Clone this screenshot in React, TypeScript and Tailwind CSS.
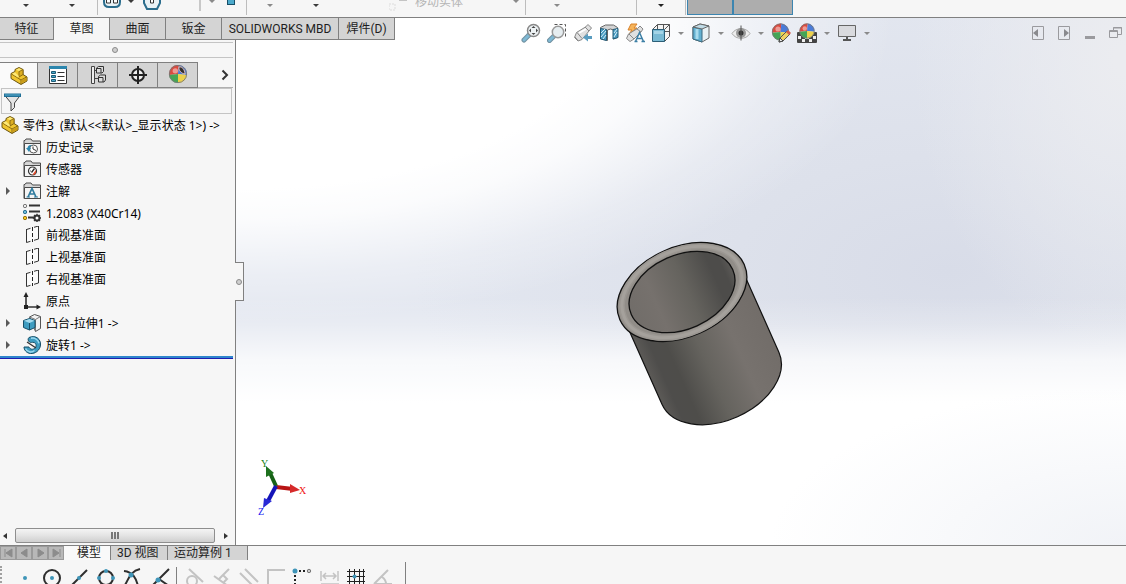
import React from "react";

const uiFont = "font-['Noto_Sans','Noto_Sans_CJK_SC',sans-serif]";
const tabFont = "font-['Roboto','Noto_Sans_CJK_SC',sans-serif]";

const commandTabs = [
  { label: "特征", width: "w-[54px]" },
  { label: "草图", width: "w-14", active: true },
  { label: "曲面", width: "w-14" },
  { label: "钣金", width: "w-14" },
  { label: "SOLIDWORKS MBD", width: "w-[117px]" },
  { label: "焊件(D)", width: "w-14" },
];

const motionTabs = [
  { label: "模型", width: "w-[47px]", active: true },
  { label: "3D 视图", width: "w-[57px]" },
  { label: "运动算例 1", width: "w-20" },
];

type SvgProps = { children: React.ReactNode; size?: number };

function Svg({ children, size = 20 }: SvgProps) {
  return (
    <svg width={size} height={size} viewBox={`0 0 ${size} ${size}`} fill="none" className="block shrink-0" aria-hidden="true">
      {children}
    </svg>
  );
}

function Caret({ className = "text-[#8a8a8a]" }: { className?: string }) {
  return (
    <svg width="6" height="3" viewBox="0 0 6 3" className={`shrink-0 ${className}`} aria-hidden="true">
      <path d="M0 0h6L3 3z" fill="currentColor" />
    </svg>
  );
}

/* ---------- Feature tree icons (18px) ---------- */

function PartIcon() {
  return (
    <Svg size={18}>
      <path d="M1 6.500l4-2V2.500l4-2 4 2v5l4 2.500v4l-6 3.500L1 11.500z" fill="#f0c52e" stroke="#6b5410" strokeLinejoin="round" />
      <path d="M1.500 7l9.500 6 5.500-3M11 13v4" stroke="#8a6b12" />
      <path d="M9 4.500l4-2v5l-4 2.500z" fill="#dcae22" stroke="#8a6b12" />
      <path d="M2 6.800l3-1.500 4 4-1 1.200zM6 2.700L9 1.200l3 1.300-3 1.600z" fill="#fde978" />
      <path d="M11.500 13.300l5-2.500v2.900l-5 2.500z" fill="#c99b18" />
    </Svg>
  );
}

function FolderBase({ children }: { children: React.ReactNode }) {
  return (
    <Svg size={18}>
      <path d="M1 16.500V2.500h1L3 1h5l1.500 2h8v13.500z" fill="#d6d6d6" stroke="#4a4a4a" />
      <path d="M1.500 5.500h16v11h-16z" fill="#f4f4f4" stroke="#4a4a4a" />
      {children}
    </Svg>
  );
}

function HistoryIcon() {
  return (
    <FolderBase>
      <circle cx="10.500" cy="11" r="4" fill="#fff" stroke="#555" />
      <path d="M10 8.500V11l3 1.500" stroke="#333" />
      <path d="M3 10l3 4 2-4H7c0-2 1-2.500 2-3-3-.5-4.500 1-4.500 3z" fill="#2c86ad" />
    </FolderBase>
  );
}

function SensorIcon() {
  return (
    <FolderBase>
      <circle cx="9.500" cy="11" r="4" fill="#fff" stroke="#333" strokeWidth="1.200" />
      <path d="M9.500 14.500l3.500-4.500v3l-2 2z" fill="#e04a2a" />
      <path d="M8.500 12.500l3-4" stroke="#222" strokeWidth="1.300" />
      <path d="M7 11h1" stroke="#555" />
    </FolderBase>
  );
}

function NoteIcon() {
  return (
    <FolderBase>
      <path d="M5 15l4-8.500 4 8.500M6.500 12h5" stroke="#2f7b9e" strokeWidth="1.700" />
      <path d="M3.500 15h3.500M11 15h4" stroke="#2f7b9e" />
    </FolderBase>
  );
}

function MaterialIcon() {
  return (
    <Svg size={18}>
      <path d="M6 1.500h11M6 7.500h11M5 13.500h6" stroke="#333" strokeWidth="2" />
      <circle cx="2" cy="2" r="1.700" fill="#eee" stroke="#777" />
      <circle cx="2" cy="8" r="1.700" fill="#6bbad8" stroke="#2a7294" />
      <circle cx="2" cy="14" r="1.700" fill="#f5c71c" stroke="#94700c" />
      <circle cx="14" cy="14" r="2.500" fill="#fff" stroke="#333" strokeWidth="2" />
      <path d="M14 9.700v2M14 16.500V18M9.800 14h2M16.500 14h1.500M11 11l1.300 1.300M17 11l-1.300 1.300M11 17l1.300-1.300M17 17l-1.300-1.300" stroke="#333" strokeWidth="1.300" />
    </Svg>
  );
}

function PlaneIcon() {
  return (
    <Svg size={18}>
      <path d="M3.500 3.500l12-3v13l-12 3.500z" fill="#fbfbfb" />
      <path d="M3.500 3v13.500M15.500 0v13M3.500 3.500l4-1.200M11 1.300l4.500-1.300M3.500 16.500l4-1.200M11 14.300l4.500-1.300" stroke="#333" />
      <path d="M9.500 1v15" stroke="#222" strokeDasharray="4 2" />
    </Svg>
  );
}

function OriginIcon() {
  return (
    <Svg size={18}>
      <path d="M3 4v11h11" stroke="#333" strokeWidth="1.600" />
      <path d="M.5 5L3 0l2.500 5zM13.500 12.500l4.500 2.500-4.500 2.500z" fill="#222" />
      <path d="M1 13h4v4H1z" fill="#222" />
    </Svg>
  );
}

function ExtrudeIcon() {
  return (
    <Svg size={18}>
      <path d="M6.500 3l5-2.500 6 2v12l-5 3z" fill="#f2f2f2" stroke="#555" />
      <path d="M12.500 5.500v12M6.500 3l6 2.500 5-3" stroke="#777" />
      <path d="M.5 6.500l6-2 5.500 2v7l-5.500 2.500-6-2.500z" fill="#3e9cc0" stroke="#174f68" />
      <path d="M1 6.700l5.500-1.700 5 1.700L6.500 9z" fill="#a5dbee" />
      <path d="M6.500 9v7" stroke="#174f68" />
    </Svg>
  );
}

function RevolveIcon() {
  return (
    <Svg size={18}>
      <path d="M6 1.500c7-3 12 2 11.500 7.500S12 18 7.500 17.500 1 13.500 1 11h5c1 2.500 4 3 6 1s1-5-1-5.500-3 .5-4.500-.5S4.500 3 6 1.500z" fill="#3e9cc0" stroke="#174f68" />
      <path d="M8 2.200c4-.7 7 2 8 5M2.500 12.500c1.500 3.500 6 4.500 9 2" stroke="#9cd9ef" strokeWidth="1.500" />
      <path d="M4 6l9 6" stroke="#333" strokeWidth="1.300" />
    </Svg>
  );
}

const treeItems = [
  { label: "历史记录", icon: <HistoryIcon /> },
  { label: "传感器", icon: <SensorIcon /> },
  { label: "注解", icon: <NoteIcon />, expandable: true },
  { label: "1.2083 (X40Cr14)", icon: <MaterialIcon /> },
  { label: "前视基准面", icon: <PlaneIcon /> },
  { label: "上视基准面", icon: <PlaneIcon /> },
  { label: "右视基准面", icon: <PlaneIcon /> },
  { label: "原点", icon: <OriginIcon /> },
  { label: "凸台-拉伸1 ->", icon: <ExtrudeIcon />, expandable: true },
  { label: "旋转1 ->", icon: <RevolveIcon />, expandable: true },
];

/* ---------- Manager tab icons ---------- */

function Ball({ cx, cy, r }: { cx: number; cy: number; r: number }) {
  return (
    <g transform={`translate(${cx} ${cy}) scale(${r})`}>
      <path d="M0 0L-1 .1A1 1 0 0 1 .1-1z" fill="#dc4a3e" />
      <path d="M0 0L.1-1A1 1 0 0 1 1 .1z" fill="#4a7bd8" />
      <path d="M0 0L1 .1A1 1 0 0 1 0 1z" fill="#ecd04a" />
      <path d="M0 0L0 1A1 1 0 0 1-1 .1z" fill="#45a555" />
      <circle cx="-.3" cy="-.35" r=".3" fill="#fff" opacity=".45" />
      <circle r=".96" stroke="#777" strokeWidth=".1" />
    </g>
  );
}

const managerTabs = [
  { name: "FeatureManager", icon: <PartIcon />, width: "w-[38px]", active: true },
  {
    name: "PropertyManager",
    width: "w-10",
    icon: (
      <Svg>
        <path d="M1.500 1.500h17v17h-17z" fill="#fff" stroke="#333" />
        <path d="M1 1h18v3H1z" fill="#2c86ad" />
        <path d="M3.500 6.500h4v2h-4zM3.500 10.500h4v2h-4zM3.500 14.500h4v2h-4z" fill="#4ba9cb" stroke="#1d5a75" />
        <path d="M9.500 7.500h7M9.500 11.500h7M9.500 15.500h7" stroke="#333" />
      </Svg>
    ),
  },
  {
    name: "ConfigurationManager",
    width: "w-10",
    icon: (
      <Svg>
        <path d="M3.500 1.500h3v17h-3zM6.500 5.500h3M6.500 13.500h4" fill="#eee" stroke="#444" />
        <path d="M8.500 3l2-1.500h5v5L14 8H8.500zM10.500 11.500l2-1.500h5v5L16 17h-5.500z" fill="#ddd" stroke="#333" />
        <path d="M8.500 3.500H13V8M10.500 12.500H15V17" stroke="#333" />
      </Svg>
    ),
  },
  {
    name: "DimXpertManager",
    width: "w-10",
    icon: (
      <Svg>
        <circle cx="10" cy="10" r="6" fill="#eee" stroke="#222" strokeWidth="2" />
        <path d="M10 1v18M1 10h18" stroke="#222" strokeWidth="2" />
      </Svg>
    ),
  },
  {
    name: "DisplayManager",
    width: "w-10",
    icon: (
      <Svg>
        <Ball cx={10} cy={9} r={9} />
        <path d="M11 2c3-1 6 3 6 7-3 0-7-4-6-7z" fill="#33302e" stroke="#e8c0b8" />
      </Svg>
    ),
  },
];

/* ---------- Heads-up view toolbar ---------- */

const viewTools = [
  {
    name: "整屏显示全图",
    icon: (
      <Svg>
        <path d="M3 17l5-5" stroke="#6f8f9f" strokeWidth="5" strokeLinecap="round" />
        <path d="M3 17l5-5" stroke="#7fb9d4" strokeWidth="3" strokeLinecap="round" />
        <circle cx="12.500" cy="7.500" r="6" fill="#eef3f5" stroke="#888" strokeWidth="1.500" />
        <path d="M12.500 3l2 2h-4zM12.500 12l2-2h-4zM8 7.500l2-2v4zM17 7.500l-2-2v4z" fill="#444" />
      </Svg>
    ),
  },
  {
    name: "局部放大",
    icon: (
      <Svg>
        <path d="M7.500 1.500h11v12" stroke="#555" strokeDasharray="3 2" />
        <path d="M2.500 17.500l4-4" stroke="#6f8f9f" strokeWidth="5" strokeLinecap="round" />
        <path d="M2.500 17.500l4-4" stroke="#7fb9d4" strokeWidth="3" strokeLinecap="round" />
        <circle cx="11" cy="9" r="5.700" fill="#e6edf0" stroke="#999" strokeWidth="1.500" />
      </Svg>
    ),
  },
  {
    name: "上一视图",
    icon: (
      <Svg>
        <path d="M1.500 14.500l2-5 9-5.500L15 1.500 18.500 5 16 8l-7 8.500-4 1.500z" fill="#e0e0e0" stroke="#888" strokeLinejoin="round" />
        <path d="M4 9.500l5 6M12 4l4 4M2 14l3 3.500" stroke="#888" />
        <path d="M6 10l7-4" stroke="#fff" strokeWidth="1.500" />
        <path d="M10 14.500l5-4v2.500h4v3h-4v2.500z" fill="#5a9dc0" />
      </Svg>
    ),
  },
  {
    name: "剖面视图",
    icon: (
      <Svg>
        <path d="M1.500 4.500l5-2.500h8l4 2.500v10l-4 1.500V7l-3-1-3 1v10.500l-7-2z" fill="#d4d4d4" stroke="#666" />
        <path d="M1.500 5.500l6 1v11l-6-1.500zM14 6.500l5-1v9l-5 1.500z" fill="#4a9cc2" stroke="#245a75" />
        <path d="M2 10l4-4M2 14l5-6M4 16l3-4M15 10l3-4M15 14l3-5" stroke="#d6eef8" />
      </Svg>
    ),
  },
  {
    name: "动态注解视图",
    icon: (
      <Svg>
        <path d="M6 1h6L9 5h3L4 11l3-4H3z" fill="#f6b45a" stroke="#d9822b" />
        <path d="M1.500 15.500l2-4.500 9-5.500L15 3l3 3-2 3-7 7-4 2.500z" fill="#e0e0e0" stroke="#888" strokeLinejoin="round" />
        <path d="M4 11l5 5M12 6l4 3" stroke="#888" />
        <path d="M10.500 18.500l4-9 4 9M12 15.500h5M9.500 18.500h3M16.500 18.500h3.500" stroke="#3c7fa5" strokeWidth="1.500" />
      </Svg>
    ),
  },
  {
    name: "视图定向",
    menu: true,
    icon: (
      <Svg>
        <path d="M1.500 6.500l5-5h12v12l-5 5M13.500 6.500l5-5M6.500 1.500v5M12.500 1.500v5M13.500 8.500h5" fill="#f4f4f4" stroke="#555" />
        <path d="M1.500 6.500h12v12h-12z" fill="#79bad4" stroke="#2c5f78" />
        <path d="M3 8h9v3H3z" fill="#a4d4e6" />
      </Svg>
    ),
  },
  {
    name: "显示样式",
    menu: true,
    icon: (
      <Svg>
        <path d="M2 4l7-3 9 2v12l-7 4-9-3z" fill="#e9f1f4" stroke="#666" />
        <path d="M2 4l9 2v13l-9-3z" fill="#63b0d0" stroke="#3c6b80" />
        <path d="M2 4l9 2 7-3-9-2z" fill="#c0dbe6" stroke="#666" />
        <path d="M6 6v10" stroke="#a9dcee" strokeWidth="3" />
      </Svg>
    ),
  },
  {
    name: "隐藏/显示项目",
    menu: true,
    icon: (
      <Svg>
        <path d="M1 10.500C5 4 15 4 19 10.500 15 17 5 17 1 10.500z" fill="#ededed" stroke="#aaa" />
        <circle cx="10" cy="10" r="5" fill="#999" />
        <circle cx="10" cy="10" r="2.500" fill="#333" />
        <path d="M10 2.500v15" stroke="#555" />
      </Svg>
    ),
  },
  {
    name: "编辑外观",
    icon: (
      <Svg>
        <Ball cx={9.5} cy={9} r={8.5} />
        <path d="M8 19l1-4 7-7 3 3-7 7z" fill="#f0d060" stroke="#555" />
        <path d="M8 19l1-4 3 3z" fill="#eee" stroke="#444" />
        <path d="M15 9l2-2 3 3-2 2z" fill="#d05a4a" />
      </Svg>
    ),
  },
  {
    name: "应用布景",
    menu: true,
    icon: (
      <Svg>
        <path d="M.5 9.500h19v10H.5z" fill="#eee" stroke="#444" />
        <path d="M1 10h4v3H1zM15 10h4v3h-4zM4 13h4v3H4zM12 13h4v3h-4zM1 16h4v3H1zM8 16h4v3H8zM15 16h4v3h-4z" fill="#444" />
        <Ball cx={10} cy={8} r={7.5} />
      </Svg>
    ),
  },
  {
    name: "视图设定",
    menu: true,
    icon: (
      <Svg>
        <path d="M1.500 2.500h17v11h-17z" fill="#d9dade" stroke="#666" />
        <path d="M9 14h2v2h3v2H6v-2h3z" fill="#555" />
      </Svg>
    ),
  },
];

/* ---------- Sketch toolbar at the bottom ---------- */

const sketchTools = [
  { name: "点", icon: <circle cx="13" cy="14" r="2" fill="#3f95b8" /> },
  {
    name: "圆",
    icon: (
      <>
        <circle cx="13" cy="14" r="8" stroke="#2e2e2e" strokeWidth="2" />
        <circle cx="13" cy="14" r="2" fill="#3f95b8" />
      </>
    ),
  },
  {
    name: "直线",
    icon: (
      <>
        <path d="M5 22L21 6" stroke="#2e2e2e" strokeWidth="2" />
        <circle cx="13" cy="14" r="2" fill="#3f95b8" />
      </>
    ),
  },
  {
    name: "象限点",
    icon: (
      <>
        <circle cx="13" cy="14" r="7" stroke="#2e2e2e" strokeWidth="2" />
        <circle cx="13" cy="7" r="2" fill="#3f95b8" />
        <circle cx="6" cy="14" r="2" fill="#3f95b8" />
        <circle cx="20" cy="14" r="2" fill="#3f95b8" />
      </>
    ),
  },
  {
    name: "交叉点",
    icon: (
      <>
        <path d="M4 7c9 1 12 7 14 15M20 5c-9 2-11 9-15 16" stroke="#2e2e2e" strokeWidth="2" />
        <circle cx="11" cy="11" r="2.500" fill="#3f95b8" />
      </>
    ),
  },
  {
    name: "最近端",
    icon: (
      <>
        <path d="M22 5L6 21M12 15l10 7" stroke="#2e2e2e" strokeWidth="2" />
        <circle cx="11" cy="16" r="2.500" fill="#3f95b8" />
      </>
    ),
  },
];

const snapTools = [
  {
    name: "相切",
    icon: (
      <>
        <circle cx="11" cy="17" r="5" stroke="#c3c3c3" strokeWidth="2" />
        <path d="M8 5l14 13" stroke="#c3c3c3" strokeWidth="2" />
      </>
    ),
  },
  { name: "垂直", icon: <path d="M6 12l14 10M21 5L11 15M15 11l4 4-3 3" stroke="#c3c3c3" strokeWidth="2" /> },
  { name: "平行", icon: <path d="M5 9l13 13M10 5l13 13" stroke="#c3c3c3" strokeWidth="2" /> },
  { name: "水平/竖直", icon: <path d="M6 24V6h17" stroke="#c3c3c3" strokeWidth="2" /> },
  {
    name: "与点水平/竖直",
    icon: (
      <>
        <path d="M6 7v17M6 7h14" stroke="#222" strokeWidth="2" strokeDasharray="2 2" />
        <circle cx="6" cy="7" r="2.500" fill="#3f95b8" />
        <circle cx="20" cy="7" r="1.700" fill="#ccc" stroke="#777" />
      </>
    ),
  },
  { name: "长度", icon: <path d="M5 7v10M22 7v10M7 12h13M10 9l-3 3 3 3M17 9l3 3-3 3M5 20h18" stroke="#c3c3c3" strokeWidth="1.500" /> },
  {
    name: "网格",
    icon: (
      <>
        <path d="M4 7.500h18M4 12.500h18M4 17.500h18M6.500 5v19M11.500 5v19M16.500 5v19M20.500 5v19" stroke="#222" />
        <circle cx="11.500" cy="12.500" r="2" fill="#3f95b8" />
      </>
    ),
  },
  { name: "角度", icon: <path d="M4 20L18 6M4 20h18M12 13c3 2 4 4 4 7" stroke="#c3c3c3" strokeWidth="2" /> },
];

function ToolButton({ name, children }: { name: string; children: React.ReactNode }) {
  return (
    <button aria-label={name} className="block w-[27px] shrink-0">
      <svg width="26" height="24" viewBox="0 0 26 24" fill="none" className="mt-1" aria-hidden="true">
        {children}
      </svg>
    </button>
  );
}

function Ribbon() {
  return (
    <header className="flex h-[18px] shrink-0 items-start overflow-hidden border-b border-[#808080] bg-[#f6f6f6] text-[#3a3a3a]">
      <button aria-label="草图绘制" className="flex h-[10px] w-[52px] items-center justify-center">
        <Caret className="text-[#3a3a3a]" />
      </button>
      <button aria-label="智能尺寸" className="flex h-[10px] w-10 items-center justify-center">
        <Caret className="text-[#3a3a3a]" />
      </button>
      <div className="ml-[5px] h-[15px] w-px bg-[#bdbdbd]" />
      <button aria-label="槽口" className="ml-[5px] flex w-[18px]">
        <svg width="18" height="8" viewBox="0 0 18 8" fill="none">
          <path d="M1 0v2c0 3 2 5 5 5h6c3 0 5-2 5-5V0" fill="#e8f1f5" stroke="#2b6d8d" strokeWidth="2" />
          <path d="M3.500-1h4v4h-4zM10.500-1h4v4h-4z" fill="#fff" stroke="#333" />
        </svg>
      </button>
      <button aria-label="槽口选项" className="flex w-5 justify-center">
        <Caret className="text-[#3a3a3a]" />
      </button>
      <button aria-label="多边形" className="flex w-[22px] justify-center">
        <svg width="18" height="10" viewBox="0 0 18 10" fill="none">
          <path d="M1 0v3l3 6h10l3-6V0" fill="#e8f1f5" stroke="#2b6d8d" strokeWidth="2" />
          <path d="M7.500-1h3v4h-3z" fill="#fff" stroke="#333" />
        </svg>
      </button>
      <div className="ml-9 h-[11px] w-0.5 bg-[#c8c8c8]" />
      <button aria-label="剪裁实体" className="flex w-[22px] justify-center">
        <Caret />
      </button>
      <button aria-label="转换实体引用" className="ml-1 flex w-2">
        <span className="h-[5px] w-full border border-t-0 border-[#174f68] bg-[#4ba9cb]" />
      </button>
      <div className="ml-[11px] h-[15px] w-px bg-[#bdbdbd]" />
      <button aria-label="等距实体" className="flex h-[10px] w-[46px] items-center justify-center">
        <Caret />
      </button>
      <button aria-label="镜向实体" className="flex h-[10px] w-[46px] items-center justify-center">
        <Caret className="text-[#3a3a3a]" />
      </button>
      <button className="-mt-1.5 ml-[50px] flex text-xs leading-4 text-[#b4b4b4]">
        <svg width="26" height="18" viewBox="0 0 26 18" fill="none" aria-hidden="true">
          <path d="M0 10h6v6H0z" stroke="#dcdcdc" strokeDasharray="2 1" />
          <path d="M10 6.500h8" stroke="#c4c4c4" />
        </svg>
        移动实体
      </button>
      <button aria-label="移动实体选项" className="ml-[45px] flex w-4 justify-center">
        <Caret />
      </button>
      <div className="ml-px h-[15px] w-px bg-[#bdbdbd]" />
      <button aria-label="显示/删除几何关系" className="ml-2 flex h-[10px] w-[46px] items-center justify-center">
        <Caret />
      </button>
      <div className="ml-14 h-[15px] w-px bg-[#bdbdbd]" />
      <button aria-label="快速捕捉" className="flex h-[10px] w-12 items-center justify-center">
        <Caret className="text-[#222222]" />
      </button>
      <div className="h-[15px] w-px bg-[#bdbdbd]" />
      <button aria-label="快速草图" className="ml-px h-[15px] w-[46px] border border-t-0 border-[#3c85b0] bg-[#adadad]" />
      <button aria-label="Instant2D" className="h-[15px] w-[60px] border border-t-0 border-[#3c85b0] bg-[#adadad]" />
    </header>
  );
}

function FeaturePanel() {
  return (
    <aside className="relative flex w-[236px] min-h-0 flex-1 flex-col border-r border-[#808080] bg-[#f6f6f6] pt-0.5">
      <div className="mr-0.5 flex h-4 shrink-0 items-center justify-center border-y border-[#c4c4c4] pr-1">
        <span className="size-1.5 rounded-full border border-[#8a8a8a] bg-[#cfcfcf]" />
      </div>

      <div role="tablist" className="mr-0.5 mt-1 flex h-[26px] shrink-0 border-b border-[#b0b0b0]">
        {managerTabs.map((tab) => (
          <button
            key={tab.name}
            role="tab"
            aria-label={tab.name}
            aria-selected={!!tab.active}
            className={`flex h-[26px] items-center justify-center border-r border-t border-[#808080] ${tab.width} ${
              tab.active ? "bg-[#fafafa]" : "border-b bg-[#d4d4d4]"
            }`}
          >
            {tab.icon}
          </button>
        ))}
        <button aria-label="更多" className="ml-auto flex w-4 items-center justify-center">
          <svg width="8" height="12" viewBox="0 0 8 12" fill="none">
            <path d="M1.500 1.500L6 6l-4.500 4.500" stroke="#333" strokeWidth="2" />
          </svg>
        </button>
      </div>

      <label className="ml-px mr-[3px] flex h-[26px] shrink-0 items-center border border-[#c4c4c4] pl-px pt-px">
        <Svg>
          <path d="M1.500 3h16l-6 8v4.500L8 19v-8z" fill="#e4e4e4" stroke="#444" />
          <path d="M1 1.500h17V5H1z" fill="#1f6f96" />
          <path d="M2 3h15" stroke="#5fb0d0" />
        </Svg>
        <input aria-label="过滤器" className="min-w-0 flex-1 bg-transparent text-xs outline-none" />
      </label>

      <div className="mr-0.5 overflow-hidden border-b border-[#1d1db0] text-xs text-black">
        <div className="border-b-2 border-[#2f86cc]">
          <div className="flex h-[22px] items-center gap-1 whitespace-pre pl-px">
            <PartIcon />
            <span className="pt-px">{"零件3  (默认<<默认>_显示状态 1>) ->"}</span>
          </div>
          <ul>
            {treeItems.map((item) => (
              <li key={item.label} className="flex h-[22px] items-center pl-1.5">
                <span className="w-[17px] shrink-0">
                  {item.expandable && (
                    <svg width="5" height="8" viewBox="0 0 5 8" aria-hidden="true">
                      <path d="M0 0l4 4-4 4z" fill="#5a5a5a" />
                    </svg>
                  )}
                </span>
                {item.icon}
                <span className="ml-[5px] whitespace-nowrap pt-px">{item.label}</span>
              </li>
            ))}
          </ul>
        </div>
      </div>

      {/* horizontal scrollbar */}
      <div className="mb-px mr-0.5 mt-auto flex h-[17px] shrink-0 items-center">
        <button aria-label="向左滚动" className="flex w-[15px] justify-start pl-[3px]">
          <svg width="4" height="6" viewBox="0 0 4 6"><path d="M4 0v6L0 3z" fill="#333" /></svg>
        </button>
        <div className="mr-1 flex h-[15px] flex-1 items-center justify-center gap-px rounded-xs border border-[#8e8e8e] bg-linear-to-b from-[#f4f4f4] via-[#e4e4e4] to-[#cfcfcf]">
          <span className="h-[7px] w-0.5 bg-[#777777]" />
          <span className="h-[7px] w-0.5 bg-[#777777]" />
          <span className="h-[7px] w-0.5 bg-[#777777]" />
        </div>
        <button aria-label="向右滚动" className="flex w-[14px] justify-center">
          <svg width="4" height="6" viewBox="0 0 4 6"><path d="M0 0v6l4-3z" fill="#333" /></svg>
        </button>
      </div>

      {/* splitter handle */}
      <button aria-label="折叠面板" className="absolute -right-[9px] top-[222px] flex h-[39px] w-[9px] items-center justify-center border border-l-0 border-[#808080] bg-[#f6f6f6]">
        <span className="size-1.5 shrink-0 rounded-full border border-[#8a8a8a] bg-[#cfcfcf]" />
      </button>
    </aside>
  );
}

function CupModel() {
  return (
    <svg width="170" height="190" viewBox="0 0 170 190" fill="none" className="absolute left-[378px] top-[222px]" aria-label="零件3">
      <defs>
        <linearGradient id="outer" x1="-64" x2="64" y1="0" y2="0" gradientUnits="userSpaceOnUse">
          <stop offset="0" stopColor="#5c5a57" />
          <stop offset=".1" stopColor="#4e4d4b" />
          <stop offset=".22" stopColor="#4e4d4a" />
          <stop offset=".45" stopColor="#65635e" />
          <stop offset=".72" stopColor="#77726e" />
          <stop offset="1" stopColor="#726d69" />
        </linearGradient>
        <linearGradient id="inner" x1="-56" x2="56" y1="0" y2="0" gradientUnits="userSpaceOnUse">
          <stop offset="0" stopColor="#716d69" />
          <stop offset=".25" stopColor="#76716d" />
          <stop offset=".55" stopColor="#65635e" />
          <stop offset=".82" stopColor="#4d4c4a" />
          <stop offset=".92" stopColor="#4d4c4a" />
          <stop offset="1" stopColor="#5c5a57" />
        </linearGradient>
      </defs>
      <g transform="translate(68 52) rotate(-24)">
        <path d="M-64 0V94.500A64 42 0 0 0 64 94.500V0z" fill="url(#outer)" stroke="#111" strokeWidth="1.200" />
        <ellipse rx="68" ry="44.800" fill="#918d88" stroke="#111" strokeWidth="1.300" />
        <ellipse rx="63" ry="41.500" stroke="#9b9792" strokeWidth="6" />
        <ellipse rx="63" ry="41.500" stroke="#a5a19c" strokeWidth="3" />
        <ellipse rx="55.500" ry="37" fill="url(#inner)" stroke="#111" strokeWidth="1.300" />
      </g>
    </svg>
  );
}

function Triad() {
  return (
    <svg width="56" height="64" viewBox="0 0 56 64" fill="none" className="absolute bottom-[26px] left-[18px]" aria-hidden="true">
      <path d="M22 32l17 2" stroke="#b81414" strokeWidth="4" />
      <path d="M36 29l10 6-10 3z" fill="#d62a2a" />
      <path d="M22 31l-6-13" stroke="#176117" strokeWidth="4" />
      <path d="M12 11l8 7-8 4z" fill="#1d701d" />
      <path d="M22 31l-8 15" stroke="#1414b8" strokeWidth="4" />
      <path d="M10 43l8 3-9 7z" fill="#2a2ad6" />
      <g fontFamily="Liberation Serif" fontSize="10">
        <text x="7" y="12" fill="#148014">Y</text>
        <text x="45" y="39" fill="#f01414">X</text>
        <text x="4" y="60" fill="#1414f0">Z</text>
      </g>
    </svg>
  );
}

function Viewport() {
  return (
    <section className="relative min-w-0 flex-1 overflow-hidden bg-[radial-gradient(ellipse_40%_30%_at_100%_100%,#f1f3f7_0%,transparent_100%),linear-gradient(to_bottom,transparent_53%,rgba(255,255,255,0.2)_58%,rgba(255,255,255,0.75)_65%,white_73%),radial-gradient(ellipse_74%_58%_at_0%_0%,white_56%,rgba(255,255,255,0.85)_66%,rgba(255,255,255,0.3)_84%,transparent_100%),radial-gradient(ellipse_24%_55%_at_100%_8%,#ebecf0_5%,transparent_100%),radial-gradient(ellipse_60%_55%_at_80%_48%,#d8dce8_0%,#dde1eb_40%,#e3e7f0_100%)]">
      <div className="flex items-start pl-[285px] pr-0.5 pt-[5px]">
        {viewTools.map((tool) => (
          <React.Fragment key={tool.name}>
            <button aria-label={tool.name} className={tool.menu ? "" : "mr-1.5"}>
              {tool.icon}
            </button>
            {tool.menu && (
              <button aria-label={`${tool.name}选项`} className="flex h-5 w-5 items-center justify-center">
                <Caret />
              </button>
            )}
          </React.Fragment>
        ))}
        <div className="ml-auto flex gap-[10px] pt-0.5">
          <button aria-label="左窗格">
            <Svg size={16}>
              <path d="M2.500 1.500h11v13h-11z" stroke="#9a9a9e" />
              <path d="M8 4v8L3 8z" fill="#8a8a8e" />
            </Svg>
          </button>
          <button aria-label="右窗格">
            <Svg size={16}>
              <path d="M2.500 1.500h11v13h-11z" stroke="#9a9a9e" />
              <path d="M8 4v8l5-4z" fill="#8a8a8e" />
            </Svg>
          </button>
          <button aria-label="最小化">
            <Svg size={16}>
              <path d="M3 11h10v3H3z" fill="#9a9a9e" />
            </Svg>
          </button>
          <button aria-label="还原">
            <Svg size={16}>
              <path d="M5.500 5V2.500h8v7H10M1.500 5.500h8v7h-8z" stroke="#9a9a9e" />
              <path d="M1 6.500h9M5 3h9" stroke="#9a9a9e" />
            </Svg>
          </button>
        </div>
      </div>
      <CupModel />
      <Triad />
    </section>
  );
}

export default function App() {
  return (
    <div className={`flex h-screen flex-col overflow-hidden bg-[#f6f6f6] text-xs text-[#1e1e1e] ${uiFont}`}>
      <Ribbon />

      <main className="flex min-h-0 flex-1">
        {/* the command tabs run past the panel, over the graphics area */}
        <div className="relative z-10 flex w-[236px] shrink-0 flex-col">
          <nav role="tablist" className={`flex h-[22px] w-max shrink-0 ${tabFont}`}>
            {commandTabs.map((tab) => (
              <button
                key={tab.label}
                role="tab"
                aria-selected={!!tab.active}
                className={`flex items-center justify-center whitespace-nowrap border-r border-[#808080] ${tab.width} ${
                  tab.active ? "bg-[#f6f6f6]" : "border-b bg-[#d4d4d4]"
                }`}
              >
                {tab.label}
              </button>
            ))}
          </nav>
          <FeaturePanel />
        </div>
        <Viewport />
      </main>

      <footer className="h-[39px] shrink-0 overflow-hidden border-t border-[#808080]">
        <div className={`flex h-[14px] ${tabFont}`}>
          {["M4 2v8M11 2v8L5 6z", "M10 2v8L4 6z", "M5 2v8l6-4z", "M11 2v8M4 2v8l6-4z"].map((d, i) => (
            <button key={d} aria-label={["最前", "向前", "向后", "最后"][i]} className="h-[14px] w-4 border border-[#9a9a9a] bg-[#b8b8b8]">
              <svg width="14" height="12" viewBox="0 0 14 12" aria-hidden="true">
                <path d={d} fill="#8c8c8c" stroke="#8c8c8c" />
              </svg>
            </button>
          ))}
          {motionTabs.map((tab) => (
            <button
              key={tab.label}
              className={`flex items-center border-r border-[#808080] whitespace-nowrap leading-[14px] ${tab.width} ${
                tab.active ? "justify-center bg-[#f9f9f9] pl-1" : "bg-[#d4d4d4] pl-1.5"
              }`}
            >
              {tab.label}
            </button>
          ))}
        </div>
        <div className="flex">
          <div className="mr-2.5 mt-1.5 h-5 border-l-2 border-dotted border-[#a0a0a0]" />
          {sketchTools.map((tool) => (
            <ToolButton key={tool.name} name={tool.name}>
              {tool.icon}
            </ToolButton>
          ))}
          <div className="ml-0.5 mr-1 mt-[7px] h-5 w-px bg-[#808080]" />
          {snapTools.map((tool) => (
            <ToolButton key={tool.name} name={tool.name}>
              {tool.icon}
            </ToolButton>
          ))}
          <div className="ml-2 mt-0.5 h-6 w-px bg-[#808080]" />
        </div>
      </footer>
    </div>
  );
}
